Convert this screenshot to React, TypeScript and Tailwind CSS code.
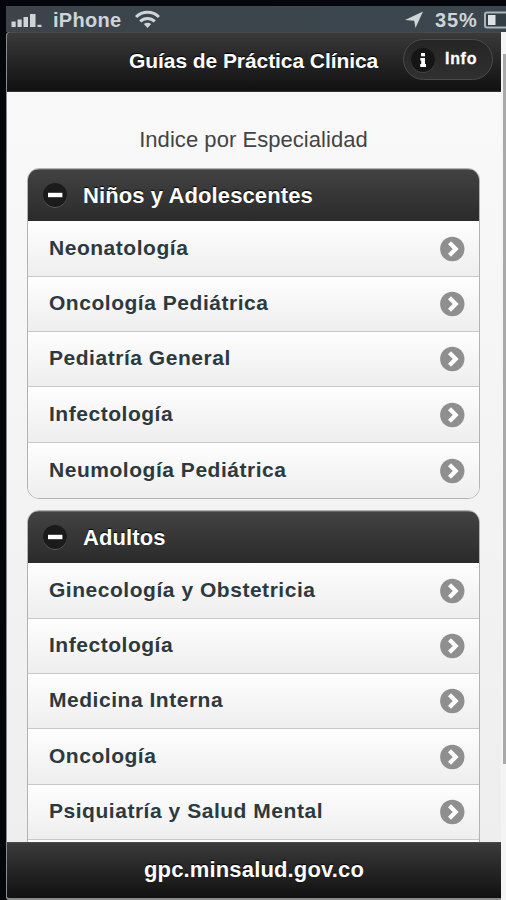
type Specialty = {
  name: string;
  height: string;
};

type Group = {
  title: string;
  headerHeight: string;
  items: Specialty[];
};

const groups: Group[] = [
  {
    title: "Niños y Adolescentes",
    headerHeight: "h-[53px]",
    items: [
      { name: "Neonatología", height: "h-[56px]" },
      { name: "Oncología Pediátrica", height: "h-[55px]" },
      { name: "Pediatría General", height: "h-[55px]" },
      { name: "Infectología", height: "h-[56px]" },
      { name: "Neumología Pediátrica", height: "h-[55px]" },
    ],
  },
  {
    title: "Adultos",
    headerHeight: "h-[53px]",
    items: [
      { name: "Ginecología y Obstetricia", height: "h-[56px]" },
      { name: "Infectología", height: "h-[55px]" },
      { name: "Medicina Interna", height: "h-[55px]" },
      { name: "Oncología", height: "h-[56px]" },
      { name: "Psiquiatría y Salud Mental", height: "h-[55px]" },
      { name: "", height: "h-[55px]" },
    ],
  },
];

const StatusBar = () => (
  <div className="ml-[6px] flex h-[26px] shrink-0 items-center overflow-hidden bg-gradient-to-r from-[#3c444a] to-[#3b464e] pt-[2px] pl-[5px] text-[#cfd4d8]">
    <svg className="shrink-0" width="31" height="16" viewBox="0 0 31 16" fill="currentColor">
      <rect x="0.5" y="9.5" width="4.2" height="5.5" />
      <rect x="6.5" y="7.5" width="4.2" height="7.5" />
      <rect x="12.5" y="5" width="4.5" height="10" />
      <rect x="19" y="2" width="5.5" height="13" />
      <rect x="26.5" y="12.8" width="4" height="2.2" />
    </svg>
    <span className="ml-[11px] w-[70px] shrink-0 text-[20px] leading-none font-bold whitespace-nowrap tracking-[0.3px]">
      iPhone
    </span>
    <svg
      className="mb-[2px] ml-[12px] shrink-0"
      width="25"
      height="19"
      viewBox="0 0 25 19"
      fill="none"
      stroke="currentColor"
      strokeWidth="3"
    >
      <path d="M1 7C7.5 0.7 17.5 0.7 24 7" />
      <path d="M5.2 11.4C9.3 7.4 15.7 7.4 19.8 11.4" />
      <path d="M8.8 14.1C11 12.3 14 12.3 16.2 14.1L12.5 18Z" fill="currentColor" stroke="none" />
    </svg>
    <svg className="ml-[244px] shrink-0" width="20" height="18" viewBox="0 0 20 18" fill="currentColor">
      <path d="M19 0.5L11.5 17L10.2 9.8L1 9Z" />
    </svg>
    <span className="ml-[11px] w-[44px] shrink-0 text-[20px] leading-none font-bold whitespace-nowrap tracking-[0.9px]">
      35%
    </span>
    <svg className="ml-[5px] shrink-0" width="40" height="18" viewBox="0 0 40 18">
      <rect x="1" y="1.5" width="36" height="15" rx="2" fill="#333d44" stroke="#aeb4b8" strokeWidth="2" />
      <rect x="4" y="4" width="7.5" height="10" fill="#dfe2e4" />
    </svg>
  </div>
);

const InfoButton = () => (
  <button className="absolute top-[6px] right-[8px] flex h-[41px] w-[90px] items-center rounded-full border border-[#4b4b4b] bg-gradient-to-b from-[#252525] to-[#303030] pl-[7px]">
    <span className="flex size-[24px] items-center justify-center rounded-full bg-[#151515] shadow-[0_1px_0_#444]">
      <svg width="8" height="14" viewBox="0 0 8 14" fill="#fff">
        <rect x="2" y="0" width="4" height="3.3" />
        <path d="M1.3 5H6V11H7V14H1.2V11H2.2V7.4H1.3Z" />
      </svg>
    </span>
    <span className="ml-[10px] pb-px text-[16px] leading-none font-bold tracking-[0.7px] text-white [-webkit-text-stroke:0.3px_white]">
      Info
    </span>
  </button>
);

const MinusIcon = () => (
  <svg width="26" height="27" viewBox="0 0 26 27">
    <circle cx="13" cy="14" r="11.8" fill="#6a6a6a" />
    <circle cx="13" cy="12.9" r="12" fill="#1b1b1b" />
    <rect x="6" y="10.8" width="14.4" height="4.4" fill="#fff" />
  </svg>
);

const ArrowIcon = () => (
  <svg width="26" height="26" viewBox="0 0 26 26">
    <circle cx="13.3" cy="13" r="12.2" fill="#8f8f8f" />
    <path d="M10.5 6.8L16.7 13L10.5 19.2" fill="none" stroke="#fff" strokeWidth="4.2" />
  </svg>
);

const SpecialtyRow = ({ name, height }: Specialty) => (
  <li
    className={`flex items-center justify-between border-b border-[#c8c8c8] bg-gradient-to-b from-[#fefefe] to-[#eeeeee] pr-[14px] pl-[21px] text-[21px] font-bold tracking-[0.53px] text-[#2c3a40] last:border-b-0 ${height}`}
  >
    <span className="pb-[2px] whitespace-nowrap">{name}</span>
    <ArrowIcon />
  </li>
);

const SpecialtyGroup = ({ title, headerHeight, items }: Group) => (
  <section className="overflow-hidden rounded-[12px] border border-[#b3b3b3] bg-white">
    <h2
      className={`-mx-px -mt-px flex items-center border-t-2 border-[#666] bg-gradient-to-b from-[#424242] to-[#2b2b2b] pl-[15px] text-[22px] font-bold tracking-[0.1px] text-white [text-shadow:0_-1px_1px_#000] ${headerHeight}`}
    >
      <MinusIcon />
      <span className="ml-[15px] pb-px whitespace-nowrap">{title}</span>
    </h2>
    <ul>
      {items.map((item, index) => (
        <SpecialtyRow key={index} {...item} />
      ))}
    </ul>
  </section>
);

const App = () => {
  return (
    <div className="flex h-[900px] w-[506px] flex-col overflow-hidden bg-[#05060b] pt-[6px] font-['Liberation_Sans',Arial,sans-serif]">
      <StatusBar />
      <div className="flex min-h-0 grow pl-[6px]">
        <div className="flex w-[495px] flex-col overflow-hidden rounded-tl-[4px] rounded-bl-[3px] border-b-2 border-l border-[#8b8b8b] bg-[#f2f2f2]">
          <header className="relative flex h-[60px] shrink-0 items-center border-t border-b border-t-[#4a4a4a] border-b-[#333] bg-gradient-to-b from-[#3a3a3a] to-[#111] pb-[2px] pl-[122px]">
            <h1 className="text-[21px] font-bold whitespace-nowrap tracking-[-0.07px] text-white [text-shadow:0_-1px_1px_#000]">
              Guías de Práctica Clínica
            </h1>
            <InfoButton />
          </header>
          <main className="min-h-0 grow overflow-hidden bg-gradient-to-b from-[#f9f9f9] to-[#eeeeee] pr-[21px] pl-[20px]">
            <p className="flex h-[76px] items-center justify-center pt-[18px] text-[22px] tracking-[0.05px] text-[#444]">
              Indice por Especialidad
            </p>
            <div className="flex flex-col gap-[11px]">
              {groups.map((group) => (
                <SpecialtyGroup key={group.title} {...group} />
              ))}
            </div>
          </main>
          <footer className="flex h-[56px] shrink-0 items-center justify-center border-t border-[#4a4a4a] bg-gradient-to-b from-[#3b3b3b] to-[#111] pb-[2px] text-[22px] font-bold tracking-[0.15px] text-white [text-shadow:0_-1px_1px_#000]">
            gpc.minsalud.gov.co
          </footer>
        </div>
        <div className="w-[5px] bg-[#f4f4f4] pt-[22px] pl-[2px]">
          <div className="h-[710px] bg-[#a9a9a9]" />
        </div>
      </div>
    </div>
  );
};

export default App;
